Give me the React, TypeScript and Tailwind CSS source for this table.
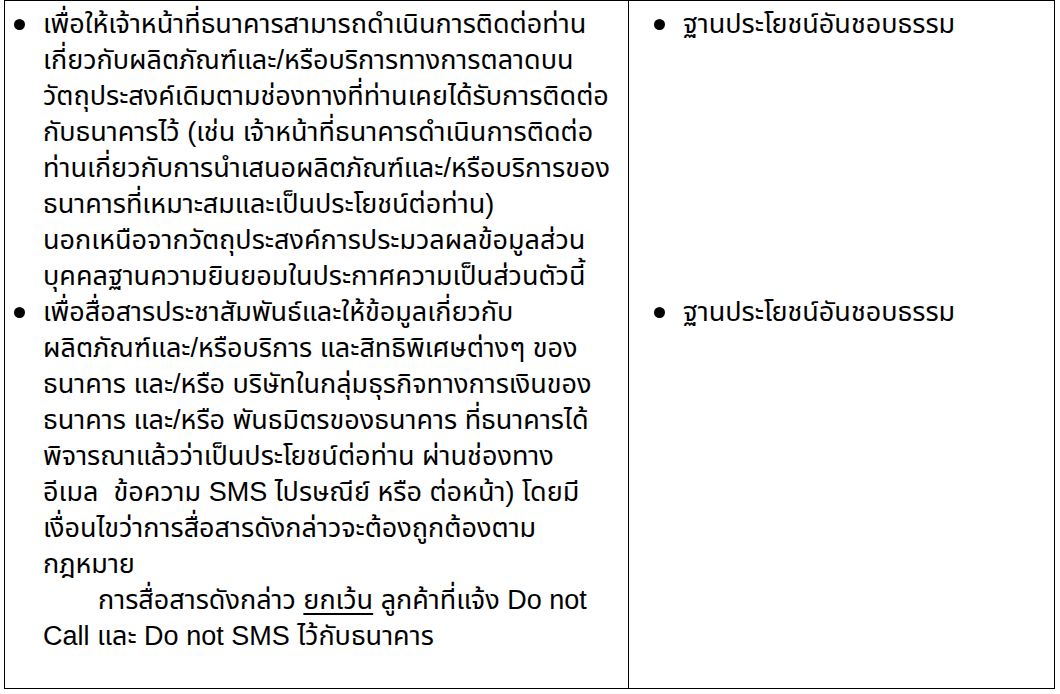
const leftFirst = [
  "เพื่อให้เจ้าหน้าที่ธนาคารสามารถดำเนินการติดต่อท่าน",
  "เกี่ยวกับผลิตภัณฑ์และ/หรือบริการทางการตลาดบน",
  "วัตถุประสงค์เดิมตามช่องทางที่ท่านเคยได้รับการติดต่อ",
  "กับธนาคารไว้ (เช่น เจ้าหน้าที่ธนาคารดำเนินการติดต่อ",
  "ท่านเกี่ยวกับการนำเสนอผลิตภัณฑ์และ/หรือบริการของ",
  "ธนาคารที่เหมาะสมและเป็นประโยชน์ต่อท่าน)",
  "นอกเหนือจากวัตถุประสงค์การประมวลผลข้อมูลส่วน",
  "บุคคลฐานความยินยอมในประกาศความเป็นส่วนตัวนี้",
]

const leftSecond = [
  "เพื่อสื่อสารประชาสัมพันธ์และให้ข้อมูลเกี่ยวกับ",
  "ผลิตภัณฑ์และ/หรือบริการ และสิทธิพิเศษต่างๆ ของ",
  "ธนาคาร และ/หรือ บริษัทในกลุ่มธุรกิจทางการเงินของ",
  "ธนาคาร และ/หรือ พันธมิตรของธนาคาร ที่ธนาคารได้",
  "พิจารณาแล้วว่าเป็นประโยชน์ต่อท่าน ผ่านช่องทาง",
  "อีเมล  ข้อความ SMS ไปรษณีย์ หรือ ต่อหน้า) โดยมี",
  "เงื่อนไขว่าการสื่อสารดังกล่าวจะต้องถูกต้องตาม",
  "กฎหมาย",
]

function Bullet() {
  return (
    <span className="flex h-[36px] w-[38px] shrink-0 items-center pl-[9px]">
      <span className="h-[11px] w-[11px] rounded-full bg-black" />
    </span>
  )
}

function Item({ lines, className = "" }: { lines: string[]; className?: string }) {
  return (
    <div className={`flex ${className}`}>
      <Bullet />
      <div>
        {lines.map((l) => (
          <div key={l} className="whitespace-pre">
            {l}
          </div>
        ))}
      </div>
    </div>
  )
}

export default function App() {
  return (
    <div className="h-[694px] w-[1060px] bg-white pl-[4px] font-['Liberation_Sans','Noto_Sans_Thai',sans-serif] text-[27px] leading-[36px] text-black">
      <div className="flex h-[689px] w-[1051px] border-[1.5px] border-black">
        <div className="w-[624px] shrink-0 border-r-[1.5px] border-black pt-[5px]">
          <Item lines={leftFirst} />
          <Item lines={leftSecond} />
          <div className="pl-[93px]">
            การสื่อสารดังกล่าว <span className="underline underline-offset-4">ยกเว้น</span>{" "}
            ลูกค้าที่แจ้ง Do not
          </div>
          <div className="pl-[38px]">Call และ Do not SMS ไว้กับธนาคาร</div>
        </div>
        <div className="flex-1 pl-[16px] pt-[5px]">
          <Item lines={["ฐานประโยชน์อันชอบธรรม"]} />
          <Item lines={["ฐานประโยชน์อันชอบธรรม"]} className="mt-[252px]" />
        </div>
      </div>
    </div>
  )
}
